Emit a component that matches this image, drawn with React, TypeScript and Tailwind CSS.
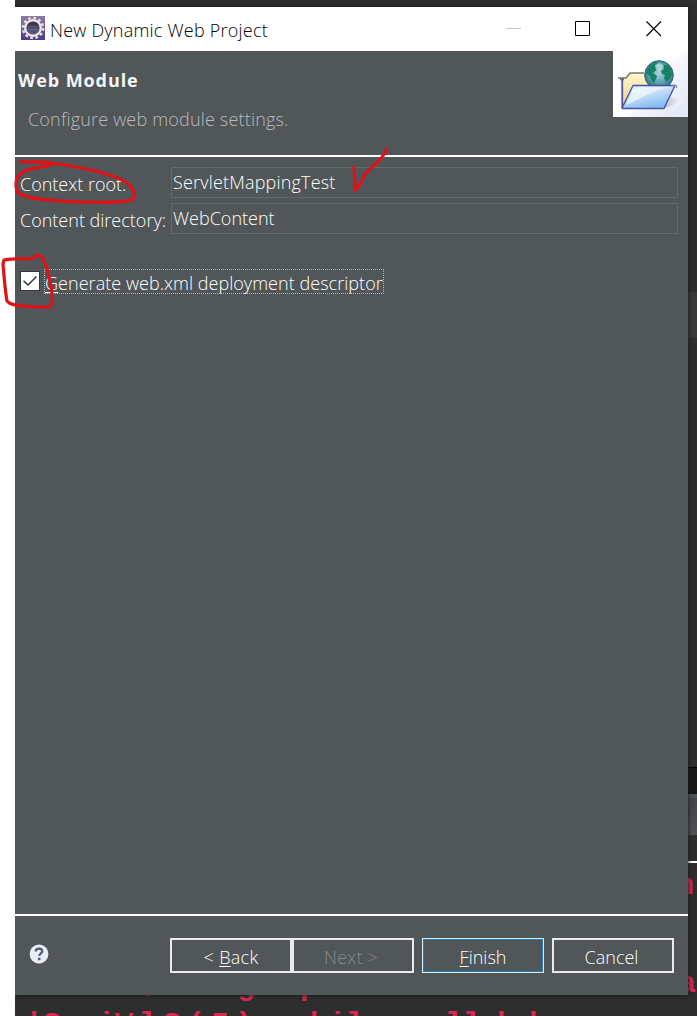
import type { ReactNode } from "react";

const label = "whitespace-nowrap text-[18px] leading-[24px] font-light text-white";

function AppIcon() {
  return (
    <svg width="24" height="24" viewBox="0 0 24 24" className="shrink-0">
      <defs>
        <linearGradient id="appBg" x1="0" y1="0" x2="0" y2="1">
          <stop offset="0" stopColor="#8d7c9f" />
          <stop offset="1" stopColor="#50398c" />
        </linearGradient>
        <linearGradient id="appCore" x1="0" y1="0" x2="0" y2="1">
          <stop offset="0" stopColor="#302b45" />
          <stop offset="1" stopColor="#66618c" />
        </linearGradient>
      </defs>
      <rect width="24" height="24" fill="url(#appBg)" />
      <circle cx="12" cy="12" r="10" fill="none" stroke="#e5e0df" strokeWidth="2.6" strokeDasharray="2.7 2.536" />
      <circle cx="12" cy="12" r="7.8" fill="url(#appCore)" stroke="#e9e5e2" strokeWidth="2.4" />
      <path d="M7 11h10M7 13.5h10" stroke="#77749b" strokeWidth="0.7" />
    </svg>
  );
}

function WebFolder() {
  return (
    <svg width="75" height="66" viewBox="0 0 75 66" className="shrink-0">
      <defs>
        <linearGradient id="wash" x1="0" y1="0" x2="1" y2="1">
          <stop offset="0.3" stopColor="#ffffff" />
          <stop offset="1" stopColor="#e0e5f6" />
        </linearGradient>
        <linearGradient id="front" x1="0" y1="0" x2="0.5" y2="1">
          <stop offset="0" stopColor="#e9f5fe" />
          <stop offset="0.5" stopColor="#c2def8" />
          <stop offset="1" stopColor="#85b9ef" />
        </linearGradient>
        <linearGradient id="back" x1="0" y1="0" x2="0" y2="1">
          <stop offset="0" stopColor="#fff7cf" />
          <stop offset="1" stopColor="#edcf87" />
        </linearGradient>
        <radialGradient id="globe" cx="0.5" cy="0.45" r="0.55">
          <stop offset="0" stopColor="#a5d3dc" />
          <stop offset="0.65" stopColor="#579dad" />
          <stop offset="1" stopColor="#26717c" />
        </radialGradient>
        <linearGradient id="shade" x1="0" y1="0" x2="1" y2="0">
          <stop offset="0" stopColor="#c5c6cf" />
          <stop offset="1" stopColor="#e6e8f2" />
        </linearGradient>
      </defs>
      <rect width="75" height="66" fill="#fff" />
      <path d="M75 0C65 3 56 9 51 17C43 35 30 56 12 66H75Z" fill="url(#wash)" />
      <path d="M51 57L58 46L66 49Q62 55 51 57Z" fill="url(#shade)" />
      <path d="M9 57V27H13L17 22H38V57Z" fill="url(#back)" />
      <path d="M9 57V27M5 27H13L17 22H31M7 28.5H11" fill="none" stroke="#77756d" strokeWidth="1.4" />
      <path d="M9.5 56V28" stroke="#5554a0" strokeWidth="1.3" />
      <circle cx="46" cy="24" r="14.3" fill="url(#globe)" stroke="#375e6b" strokeWidth="1" />
      <path d="M34 19L37 14L42 11L45 12L43 15L46 18L42 20L40 22L44 25L43 28L41 32L38 29L37 25L33 22ZM51 14L55 14L58 18L59 23L56 29L53 31L51 27L52 24L49 23L48 20L51 18Z" fill="#1a8063" />
      <path d="M42 14L46 12L50 14L49 18L46 21L43 19Z" fill="#c2e2e2" opacity=".7" />
      <path d="M9 57L20 34.5H62L51 57.5H10Z" fill="url(#front)" stroke="#4655a7" strokeWidth="1.4" strokeLinejoin="round" />
      <path d="M13 54L21 36H59Q48 37 38 42T13 54Z" fill="#eff8ff" opacity=".75" />
      <path d="M60 34.5H63L64 37" stroke="#888fad" strokeWidth="1.4" fill="none" />
    </svg>
  );
}

function Field({ name, value }: { name: string; value: ReactNode }) {
  return (
    <div className="flex h-[31px]">
      <div className={`${label} w-[151px] shrink-0 pt-[5px]`}>{name}</div>
      <div className={`${label} h-[31px] w-[507px] border border-[#63686b] pt-[2px] pl-px`}>{value}</div>
    </div>
  );
}

function Button({ children, look }: { children: ReactNode; look: string }) {
  return (
    <button className={`flex h-[35px] w-[122px] items-center justify-center border-2 pt-[3px] text-[18px] leading-6 font-light ${look}`}>
      {children}
    </button>
  );
}

const codeLine = "absolute font-['Liberation_Mono'] text-[30px] leading-[34px] font-bold whitespace-pre text-[#dc2751]";

export default function App() {
  return (
    <div className="relative h-[1016px] w-[697px] overflow-hidden bg-white pl-[15px] font-['Open_Sans',sans-serif]">
      <div className="relative h-full overflow-hidden bg-[#2e2e2e] pt-[7px]">
        <div className="absolute top-0 right-0 flex h-full w-[9px] flex-col">
          <div className="h-[292px]" />
          <div className="h-[46px] bg-[#393939]" />
          <div className="h-[429px]" />
          <div className="h-[27px] border-t border-black bg-[#171717]" />
          <div className="h-[41px] border-t-4 border-b border-t-[#4c5457] border-b-[#58554f] bg-linear-to-b from-[#44464a] to-[#505056]" />
          <div className="h-[26px]" />
          <div className="h-[2px] bg-white" />
        </div>
        <span className={`${codeLine} top-[869px] left-[661px]`}>n</span>
        <span className={`${codeLine} top-[967px] left-[663px]`}>a</span>
        <span className={`${codeLine} top-[966px] left-[127px]`}>,</span>
        <span className={`${codeLine} top-[970px] left-[222px]`}>g</span>
        <span className={`${codeLine} top-[970px] left-[285px]`}>p</span>
        <span className={`${codeLine} top-[1008px] left-[10px]`}>&apos;S</span>
        <span className={`${codeLine} top-[1008px] left-[82px]`}>i</span>
        <span className={`${codeLine} top-[1008px] left-[100px] tracking-[6px]`}>WlS(5)</span>
        <span className={`${codeLine} top-[1008px] left-[295px]`}>h</span>
        <span className={`${codeLine} top-[1008px] left-[313px]`}>il</span>
        <span className={`${codeLine} top-[1008px] left-[430px]`}>ll</span>
        <span className={`${codeLine} top-[1008px] left-[482px]`}>b</span>
        <span className={`${codeLine} top-[1008px] left-[514px]`}>b</span>

        <div className="relative flex h-[988px] w-[673px] flex-col bg-[#515658] shadow-[0_0_5px_#181818]">
          <div className="flex h-[44px] shrink-0 bg-white pl-[6px]">
            <div className="pt-[9px]"><AppIcon /></div>
            <h1 className="flex-1 pt-[11px] pl-[5px] text-[18px] leading-[24px] font-light tracking-[0.22px] text-black">New Dynamic Web Project</h1>
            <svg width="190" height="44" viewBox="0 0 190 44" fill="none">
              <path d="M8 21.5h15" stroke="#c4c4c4" />
              <path d="M77.5 14.5h14v14h-14Z" stroke="#000" />
              <path d="M148.5 14.5l14.5 14.5M163 14.5l-14.5 14.5" stroke="#000" strokeWidth="1.1" />
            </svg>
          </div>

          <header className="flex h-[106px] shrink-0 justify-between border-b-2 border-white">
            <div className="pt-[17px] pl-[3px]">
              <h2 className="text-[18px] leading-[24px] font-bold tracking-[0.9px] text-[#f2f6f8]">Web Module</h2>
              <p className="mt-[15px] pl-[10px] text-[18px] leading-[24px] font-light tracking-[0.18px] text-[#b7babc]">Configure web module settings.</p>
            </div>
            <WebFolder />
          </header>

          <main className="flex-1 pt-[10px] pl-[5px]">
            <div className="flex flex-col gap-[5px]">
              <Field name="Context root:" value={<span className="tracking-[0.18px]">ServletMappingTest</span>} />
              <Field name="Content directory:" value="WebContent" />
            </div>
            <div className="mt-[35px] flex">
              <svg width="20" height="20" viewBox="0 0 20 20" className="mt-[2px] shrink-0">
                <rect x=".5" y=".5" width="19" height="19" fill="#fff" stroke="#343839" />
                <path d="M3.5 9.7L8 14L16.5 5.5" fill="none" stroke="#333" strokeWidth="1.5" />
              </svg>
              <div className={`${label} ml-[4px] h-[25px] w-[340px] border border-dotted border-[#b5b8ba] pt-px tracking-[0.04px]`}>
                <u className="underline-offset-2">G</u>enerate web.xml deployment descriptor
              </div>
            </div>
          </main>

          <footer className="flex h-[81px] shrink-0 border-t-2 border-white pt-[22px] text-white">
            <svg width="20" height="20" viewBox="0 0 20 20" className="mt-[6px] ml-[14px] shrink-0">
              <circle cx="10" cy="10" r="9.4" fill="#e9edf5" />
              <path d="M6.7 7.5C6.7 5.5 8 4.6 10 4.6C12.1 4.6 13.3 5.7 13.3 7.3C13.3 9.5 10.3 9.5 10.3 12" fill="none" stroke="#535b70" strokeWidth="2.2" />
              <circle cx="10.2" cy="15" r="1.4" fill="#535b70" />
            </svg>
            <div className="ml-[121px] flex">
              <Button look="border-[#e8eaee] tracking-[0.3px]"><span>&lt; <u className="underline-offset-2">B</u>ack</span></Button>
              <Button look="border-[#e8eaee] pr-[4px] tracking-[0.2px] text-[#858a8c]">Next &gt;</Button>
            </div>
            <div className="ml-[8px] flex gap-[8px]">
              <Button look="border-[#247bb9] outline -outline-offset-1 outline-[#d7f0ff]"><span><u className="underline-offset-2">F</u>inish</span></Button>
              <Button look="border-[#e8eaee] pr-[3px]">Cancel</Button>
            </div>
          </footer>
        </div>
      </div>

      <svg width="697" height="320" viewBox="0 0 697 320" className="pointer-events-none absolute top-0 left-0" fill="none" stroke="#e21118" strokeWidth="3.2" strokeLinecap="round" strokeLinejoin="round">
        <path d="M21 162C32 161 47 162 59 164C83 168 112 173 127 183C133 188 136 193 134 198C130 204 100 202 81 202C57 201 30 200 18 193C14 184 16 176 23 172C32 166 47 168 52 164" />
        <path d="M387 149C384 158 374 165 366 173C361 179 360 188 355 190L354 167" />
        <path d="M30 259C20 259 13 258 4 260L3 264C4 276 5 290 7 301C10 306 23 306 36 307L50 307C54 301 52 294 51 286C49 275 46 264 42 257C38 252 35 258 30 259" />
      </svg>
    </div>
  );
}
